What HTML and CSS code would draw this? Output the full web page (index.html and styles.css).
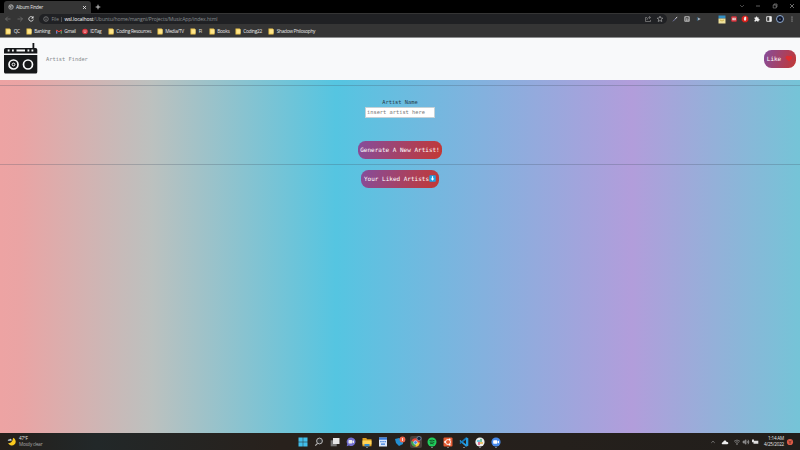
FILE: index.html
```
<!DOCTYPE html>
<html lang="en">
<head>
<meta charset="utf-8">
<title>Album Finder</title>
<link rel="stylesheet" href="styles.css">
</head>
<body>
<svg class="defs" aria-hidden="true"><defs>
<symbol id="folder" viewBox="0 0 6 7"><path fill="#efc74f" d="M.5.5h4.2l.8 1v5h-5z"/><path fill="#ffe68b" d="M1.5 1.5h4v4h-4z"/></symbol>
</defs></svg>
<div class="desktop">
<header class="tabs">
  <div class="tab">
    <svg width="6" height="6" viewBox="0 0 6 6"><circle cx="3" cy="3" r="2.3" fill="#555" stroke="#b8b8b8" stroke-width=".7"/><path d="M1 2l2 .5L2.5 4M3.5 1l1.3 1.5" stroke="#ccc" stroke-width=".6" fill="none"/></svg>
    <span>Album Finder</span>
    <svg class="close" width="5" height="5" viewBox="0 0 5 5"><path d="M1 1l3 3M4 1L1 4" stroke="#eee" stroke-width=".8"/></svg>
  </div>
  <svg class="plus" width="6" height="6" viewBox="0 0 6 6"><path d="M3 .7v4.6M.7 3h4.6" stroke="#ddd" stroke-width=".9"/></svg>
  <div class="window-controls">
    <svg width="6" height="6" viewBox="0 0 6 6"><path d="M1 2l2 2 2-2" fill="none" stroke="#777" stroke-width=".6"/></svg>
    <svg width="6" height="6" viewBox="0 0 6 6"><path d="M1 3h4" stroke="#888" stroke-width=".7"/></svg>
    <svg width="6" height="6" viewBox="0 0 6 6"><path d="M1.2 2h3v3h-3zM2 2V1h3v3h-.8" fill="none" stroke="#999" stroke-width=".6"/></svg>
    <svg width="6" height="6" viewBox="0 0 6 6"><path d="M1 1l4 4M5 1L1 5" stroke="#999" stroke-width=".7"/></svg>
  </div>
</header>
<div class="toolbar">
  <div class="nav-icons">
    <svg viewBox="0 0 8 8"><path d="M6.5 4h-5M3.8 1.7L1.5 4l2.3 2.3" fill="none" stroke="#777" stroke-width=".7"/></svg>
    <svg viewBox="0 0 8 8"><path d="M1.5 4h5M4.2 1.7L6.5 4 4.2 6.3" fill="none" stroke="#777" stroke-width=".7"/></svg>
    <svg viewBox="0 0 8 8"><path d="M6 2.6A2.3 2.3 0 1 0 6.3 4.5" fill="none" stroke="#eee" stroke-width=".8"/><path d="M6.5 1v2.5H4z" fill="#eee"/></svg>
  </div>
  <div class="address">
    <svg width="6" height="6" viewBox="0 0 6 6"><circle cx="3" cy="3" r="2.3" fill="none" stroke="#999" stroke-width=".6"/><path d="M3 2.7v1.5M3 1.6v.6" stroke="#aaa" stroke-width=".6"/></svg>
    <span class="scheme">File</span><i class="sep"></i>
    <span class="url"><b>wsl.localhost</b>/Ubuntu/home/mangni/Projects/MusicApp/index.html</span>
    <svg class="share" width="8" height="8" viewBox="0 0 8 8"><path d="M3 2.5H1.5v4h5V5M3 5c0-2 1-2.5 3-2.5M5 1.2l1.7 1.3L5 3.8" fill="none" stroke="#999" stroke-width=".6"/></svg>
    <svg width="8" height="8" viewBox="0 0 8 8"><path d="M4 1.2l.8 1.8 2 .2-1.5 1.3.5 2L4 5.5l-1.8 1 .5-2L1.2 3.2l2-.2z" fill="none" stroke="#bbb" stroke-width=".6"/></svg>
  </div>
  <div class="extensions">
    <svg viewBox="0 0 8 8"><path d="M2 6.3l3-3" stroke="#8c8fc9" stroke-width=".8"/><path d="M4.5 3.7l1.7-1.8" stroke="#ddd" stroke-width="1"/></svg>
    <svg viewBox="0 0 8 8"><rect x="1.3" y="1.2" width="5.4" height="5.6" rx=".8" fill="#bbb"/><path d="M2.8 5.8V2.5h2.4v1.3H3.6M4 5h1.6" fill="none" stroke="#333" stroke-width=".7"/></svg>
    <svg viewBox="0 0 8 8"><path d="M2.4 2.2v3.6L5.8 4z" fill="#a7b1bb"/><path d="M2.3 2.2v3.6" stroke="#28516d"/></svg>
    <svg class="gap" viewBox="0 0 8 8"><path fill="#328fc4" d="M.5.5h7v3h-7z"/><path fill="#eee09b" d="M.5 3.5h7V8.500h-7z"/><path d="M2 5l2 1 2-1" stroke="#ba981d" stroke-width=".6" fill="none"/></svg>
    <svg viewBox="0 0 8 8"><rect x="1.2" y="1.2" width="5.6" height="5.6" rx="1" fill="#d32f39"/><path fill="#eee" d="M2.2 2.8h3.6v2.4H2.2z"/><path d="M3 3v1.8M4.8 3v1.8" stroke="#b33" stroke-width=".5"/></svg>
    <svg viewBox="0 0 8 8"><path fill="#d9211c" d="M2.5.7h3l1.8 1.8v3L5.5 7.3h-3L.7 5.5v-3z"/><path fill="#eee" d="M2.8 3.3h.5V2h.6v-.5h.6V2h.7v2.5c0 1.4-1.8 1.5-2.2.6z"/></svg>
    <svg viewBox="0 0 8 8"><path fill="#eee" d="M1.5 2.5h1.3c-.2-1.5 1.7-1.5 1.5 0h1.3v1.4c1.6 0 1.6 1.6 0 1.5v1.2H4.2c0-1.1-1.2-1.1-1.2 0H1.5V5.1c1.1 0 1.1-1.3 0-1.3z"/></svg>
    <svg viewBox="0 0 8 8"><path fill="#333" stroke="#eee" stroke-width=".9" d="M1.7 1.7h4.6v4.6H1.7z"/><path fill="#eee" d="M4.3 1.5h2v5h-2z"/></svg>
    <svg viewBox="0 0 8 8"><circle cx="4" cy="4" r="3.5" fill="#111b35" stroke="#9db9dc" stroke-width=".9"/><circle cx="4" cy="4" r="1.600" fill="#080b18"/><circle cx="4" cy="4" r=".6" fill="#eee"/></svg>
    <svg viewBox="0 0 8 8"><g fill="#ccc"><circle cx="4" cy="2" r=".6"/><circle cx="4" cy="4" r=".6"/><circle cx="4" cy="6" r=".6"/></g></svg>
  </div>
</div>
<nav class="bookmarks">
  <span><svg><use href="#folder"/></svg>QC</span>
  <span><svg><use href="#folder"/></svg>Banking</span>
  <span><svg viewBox="0 0 6 7"><path fill="none" stroke="#e9473c" stroke-width="1" d="M.7 5.5V2L3 3.8 5.3 2v3.5"/><path stroke="#4b91e8" d="M.7 3v2.6"/><path stroke="#39ae64" d="M5.3 3v2.6"/></svg>Gmail</span>
  <span><svg viewBox="0 0 6 7"><circle cx="3" cy="3.5" r="2.8" fill="#d9363e"/><path stroke="#edb1b4" stroke-width=".8" d="M1.3 3h3.4M1.8 4.4h2.4"/></svg>IDTag</span>
  <span><svg><use href="#folder"/></svg>Coding Resources</span>
  <span><svg><use href="#folder"/></svg>Media/TV</span>
  <span><svg><use href="#folder"/></svg>FI</span>
  <span><svg><use href="#folder"/></svg>Books</span>
  <span><svg><use href="#folder"/></svg>Coding22</span>
  <span><svg><use href="#folder"/></svg>Shadow Philosophy</span>
</nav>
<div class="navbar">
  <svg class="logo" width="34" height="31" viewBox="0 0 34 31"><path fill="#151719" d="M28.5 0h1.8v5h1.2c1.2 0 1.8.8 1.8 2v3.4H0V7c0-1.2.8-2 2-2h26.5zM0 12h33.3v16.7c0 1.2-.8 1.9-2 1.9H2c-1.2 0-2-.7-2-1.9z"/><path fill="#f8f9fa" d="M12.500 6.500H21v2h-8.500zM3.700 6.500h1.800v2H3.700zM8 6.500h1.800v2H8zM23.500 6.500h1.800v2h-1.800zM27.500 6.500h1.800v2h-1.800z"/><g fill="none" stroke="#f8f9fa"><circle cx="9.500" cy="21.500" r="4.500" stroke-width="1.700"/><circle cx="24" cy="21.500" r="4.500" stroke-width="1.700"/><circle cx="9.500" cy="21.500" r="1.400" stroke-width="1"/></g></svg>
  <span class="brand">Artist Finder</span>
  <button class="pill like">Like <svg width="8" height="7" viewBox="0 0 8 7"><path fill="#dd2e32" d="M4 6.500L.9 3.500C-.3 1.800 2.200-.5 4 1.300 5.800-.5 8.300 1.800 7.100 3.500z"/></svg></button>
</div>
<main>
  <section class="finder">
    <label for="artist">Artist Name</label>
    <input id="artist" placeholder="insert artist here">
    <button class="pill generate">Generate A New Artist!</button>
  </section>
  <button class="pill liked">Your Liked Artists<svg width="7" height="7" viewBox="0 0 7 7"><rect x=".3" y=".2" width="6.500" height="6.600" rx=".8" fill="#1da0e2"/><path d="M3.500 1.200v3" stroke="#fff" stroke-width="1.200"/><path fill="#fff" d="M1.700 3.600h3.600L3.500 5.800z"/></svg></button>
</main>
<footer class="taskbar">
  <div class="weather">
    <svg width="9" height="9" viewBox="0 0 9 9"><path fill="#f9c91f" d="M6 .8a4 4 0 1 1-5 5.300C4 6.500 6 4 6 .8z"/><path fill="#c4d5df" d="M.8 3.800c0-1.200 1-1.500 1.500-1.300C3 1 5 1.800 4.600 3.800z"/></svg>
    <div>47°F<br><span>Mostly clear</span></div>
  </div>
  <div class="apps">
    <svg viewBox="0 0 12 12"><path fill="#41bde9" d="M1.500 1.500h4.300v4.300H1.500zM6.200 1.500h4.300v4.300H6.200zM1.500 6.200h4.300v4.300H1.500zM6.200 6.200h4.300v4.300H6.200z"/></svg>
    <svg viewBox="0 0 12 12"><circle cx="6.500" cy="5" r="2.900" fill="#333" stroke="#b8b8b8"/><path d="M4.500 7.300L2.300 9.700" stroke="#b8b8b8" stroke-width="1.100"/></svg>
    <svg viewBox="0 0 12 12"><path fill="#777" d="M1.700 4.300h6v6h-6z"/><path fill="#e6e6e6" d="M4 2h6.500v6H4z"/></svg>
    <svg viewBox="0 0 12 12"><path fill="#716fd0" d="M6 1.500a4.300 4.300 0 1 1-2 8l-2.300.8.600-2.300A4.300 4.300 0 0 1 6 1.500z"/><rect x="3.500" y="4" width="3.800" height="3.500" rx=".7" fill="#eee"/><path fill="#eee" d="M7.500 5.200L9 4.300v3l-1.500-.7z"/></svg>
    <svg class="running" viewBox="0 0 12 12"><path fill="#dda020" d="M1.500 2h3.700l1 1.300h4.300v7h-9z"/><path fill="#ffd45a" d="M1.500 4.500h9v4h-9z"/><path fill="#3489cf" d="M3.500 8h5v2.300h-5z"/></svg>
    <svg viewBox="0 0 12 12"><path fill="#dce8fb" d="M2 1.500h8v9H2z"/><path fill="#397cda" d="M2 1.500h8v2.300H2zM3.300 5h1.300v1.300H3.300zM5.400 5h1.300v1.300H5.400zM7.500 5h1.300v1.300H7.500zM4 7.500h4v1.300H4z"/></svg>
    <svg viewBox="0 0 12 12"><path fill="#238ed0" d="M1 3l4-1 4 2v4L5 10 2 7z"/><circle cx="8.500" cy="3.500" r="2.900" fill="#ed674c"/><path d="M8.500 2v3" stroke="#fff" stroke-width=".8"/></svg>
    <svg class="active" viewBox="0 0 12 12"><circle cx="5.500" cy="6.500" r="4.200" fill="#e54236"/><path fill="#f7c928" d="M5.500 6.500h4.200a4.200 4.200 0 0 1-4.200 4.200z"/><path fill="#36a852" d="M5.500 6.500v4.200A4.200 4.200 0 0 1 1.500 5z"/><circle cx="5.500" cy="6.500" r="1.800" fill="#4285e9" stroke="#eee" stroke-width=".7"/><circle cx="9" cy="2.500" r="2.100" fill="#18243e" stroke="#91a9c6" stroke-width=".6"/></svg>
    <svg class="running" viewBox="0 0 12 12"><circle cx="6" cy="6" r="4.500" fill="#20cf5c"/><path d="M3.500 4.500q3-.8 5.200.3M3.800 6.200q2.500-.6 4.500.3M4.100 7.700q2-.5 3.500.3" fill="none" stroke="#10351c" stroke-width=".8"/></svg>
    <svg class="running" viewBox="0 0 12 12"><rect x="1.500" y="1.500" width="9" height="9" rx="1" fill="#e65c32"/><circle cx="6" cy="6" r="2.500" fill="none" stroke="#fff" stroke-width=".9"/><g fill="#fff"><circle cx="3" cy="6" r=".9"/><circle cx="7.700" cy="3.300" r=".9"/><circle cx="7.700" cy="8.700" r=".9"/></g></svg>
    <svg class="running" viewBox="0 0 12 12"><path fill="#269bdf" d="M8 1.300l2.300 1v7.400L8 10.700 1.500 5l.8-1L8 8.300z"/><path fill="#1379bd" d="M8 1.300v2.400L2.300 8l-.8-1z"/></svg>
    <svg class="running" viewBox="0 0 12 12"><circle cx="6" cy="6" r="4.600" fill="#eee"/><g stroke-width="1.300" stroke-linecap="round"><path d="M3.500 5h2" stroke="#43b9da"/><path d="M7 3.500v2" stroke="#32ae79"/><path d="M6.500 7h2" stroke="#e7b43c"/><path d="M5 6.500v2" stroke="#d73665"/></g></svg>
    <svg class="running" viewBox="0 0 12 12"><circle cx="6" cy="6" r="4.600" fill="#488bea"/><rect x="3.200" y="4.300" width="4" height="3.400" rx=".6" fill="#fff"/><path fill="#fff" d="M7.500 5.500l1.500-1v3l-1.500-1z"/></svg>
  </div>
  <div class="tray">
    <svg viewBox="0 0 8 8"><path d="M2.300 4.800L4 3.200l1.700 1.600" fill="none" stroke="#aaa" stroke-width=".6"/></svg>
    <svg class="cloud" viewBox="0 0 8 8"><path fill="#eee" d="M1.500 6.200C.2 6.200.7 4 2.100 4.300 2.500 2 5.300 2.200 5.500 4c2.300-.2 2.300 2.200.8 2.200z"/></svg>
    <svg class="wifi" viewBox="0 0 8 8"><path d="M1 3.300q3-2.600 6 0M2.200 4.500q1.800-1.600 3.600 0" fill="none" stroke="#888" stroke-width=".8"/><circle cx="4" cy="6" r=".7" fill="#bbb"/></svg>
    <svg viewBox="0 0 8 8"><path d="M1 3h1.300L4 1.700v4.600L2.300 5H1zM5 2.800q1 1.200 0 2.400M6 1.700q2 2.300 0 4.600" fill="#777" stroke="#aaa" stroke-width=".5"/></svg>
    <svg viewBox="0 0 8 8"><path fill="#ddd" d="M2.500 2.700h4.800v3H2.500zM1 1.500h2v2.700H1z"/></svg>
    <div class="clock">1:14 AM<br>4/25/2022</div>
    <svg class="notice" viewBox="0 0 8 8"><circle cx="4" cy="4" r="3.100" fill="#dd5b46"/><path d="M2.500 3l1.500 1 1.500-1M3 5h2" stroke="#47241d" stroke-width=".6" fill="none"/></svg>
  </div>
</footer>
</div>
</body>
</html>
```
FILE: styles.css
```
* { box-sizing: border-box; }
body { margin: 0; }
svg { display: block; flex: none; }
.defs { display: none; }
.desktop {
  width: 800px; height: 450px; overflow: hidden;
  display: grid; grid-template-rows: 13px 12px 13px 42px 353px 17px;
  font-family: "Open Sans", "Noto Sans", sans-serif;
  font-size: 4.700px; letter-spacing: -.2px; color: #e6e6e6;
}
.tabs { display: flex; align-items: center; background: #000; }
.tab {
  display: flex; align-items: center; width: 87px; height: 12px; margin: 1px 0 0 4px;
  padding-left: 4px; background: #353535; border-radius: 3px 3px 0 0;
}
.tab span { margin-left: 2px; }
.close { margin: 0 4px 0 auto; }
.plus { margin-left: 4px; }
.window-controls { display: flex; gap: 10.800px; margin: -2px 5px 0 auto; }
.toolbar { display: flex; align-items: center; background: #353535; }
.nav-icons { display: flex; gap: 3.700px; margin-left: 4px; }
.nav-icons svg { width: 8px; height: 8px; }
.address {
  display: flex; align-items: center; width: 628px; height: 10px; margin-left: 4px;
  padding: 0 3px 0 4px; border-radius: 5px; background: #202124;
  color: #888c90; font-size: 4.800px; letter-spacing: 0; white-space: nowrap;
}
.scheme { width: 8px; margin-left: 2px; }
.sep { width: 1px; height: 5px; margin: 0 2px; background: #505154; }
.url { font-size: 5.130px; letter-spacing: -.11px; }
.url b { font-weight: 400; color: #fff; }
.share { margin-left: auto; margin-right: 4px; }
.extensions { display: flex; gap: 3.600px; margin-left: 4px; }
.extensions svg { width: 8px; height: 8px; overflow: visible; }
.extensions .gap { margin-left: 12px; }
.bookmarks {
  display: grid; align-items: center; padding-left: 5px;
  grid-template-columns: 20.500px 30px 26px 26px 49px 33.500px 18.500px 26px 33.500px 60px;
  background: #353535; border-bottom: 1px solid #8b8c8d; font-size: 4.800px; letter-spacing: -.3px;
}
.bookmarks span { display: flex; align-items: center; gap: 2.700px; white-space: nowrap; }
.bookmarks svg { width: 6px; height: 7px; }
.navbar {
  display: flex; align-items: center; padding: 0 4px; background: #f8f9fa;
  font-family: "DejaVu Sans Mono", monospace; letter-spacing: 0; color: #85898c; font-size: 5.350px;
}
.logo { margin-top: -2px; }
.brand { margin-left: 8px; }
.pill {
  display: flex; align-items: center; justify-content: center; border: 0; padding: 0 0 1px;
  height: 18px; border-radius: 7.500px; color: #fff; white-space: nowrap;
  font: 6px "DejaVu Sans Mono", monospace;
  background: linear-gradient(110deg, #854d9c, #c33834);
}
.like { width: 32px; margin-left: auto; gap: 4px; }
main {
  display: flex; flex-direction: column; align-items: center; padding-top: 5px;
  font-family: "DejaVu Sans Mono", monospace; letter-spacing: 0;
  background: linear-gradient(90deg, #eda3a3 0%, #eaa4a4 2.500%, #bcc1bf 19%, #55c5e1 42%, #b29ddb 79%, #75c4d7 100%);
}
.finder {
  display: flex; flex-direction: column; align-items: center; width: 100%; height: 80px;
  padding-top: 12px; border: solid rgba(65, 83, 98, .27); border-width: 1px 0;
}
.finder label { font-size: 5.400px; line-height: 9px; color: #28404d; }
.finder input {
  width: 70px; height: 11px; margin: 0 0 23px; padding: 0 1px 1px;
  border: 1px solid #c4d2d8; background: #fff;
  font: 5.350px "DejaVu Sans Mono", monospace;
}
.finder input::placeholder { color: #777; opacity: 1; }
.generate { width: 84px; }
.liked { width: 78px; margin-top: 5px; }
.taskbar {
  display: grid; grid-template-columns: 297px 206px 1fr; align-items: center;
  background: linear-gradient(90deg, #241f1b, #222829 12%, #28211c 35%, #25201c 70%, #211e1b);
  font-size: 4.600px; letter-spacing: -.2px; line-height: 5.800px;
}
.weather { display: flex; align-items: center; gap: 3px; padding-left: 7px; }
.weather span { color: #aaa; }
.apps { display: flex; gap: 4.100px; }
.apps svg { width: 12px; height: 12px; }
.apps .active { background: #49413c; border-radius: 2px; }
.apps .running { background: linear-gradient(#777, #777) center bottom / 2px 1px no-repeat; }
.tray { display: flex; align-items: center; justify-content: flex-end; padding-right: 6px; white-space: nowrap; }
.tray svg { width: 8px; height: 8px; margin-right: 1px; }
.tray .cloud { margin-left: 3px; }
.tray .wifi { margin-left: 3px; }
.clock { width: 20px; margin-left: 4px; margin-right: 2px; text-align: right; }
.tray .notice { margin-right: 0; }
```
